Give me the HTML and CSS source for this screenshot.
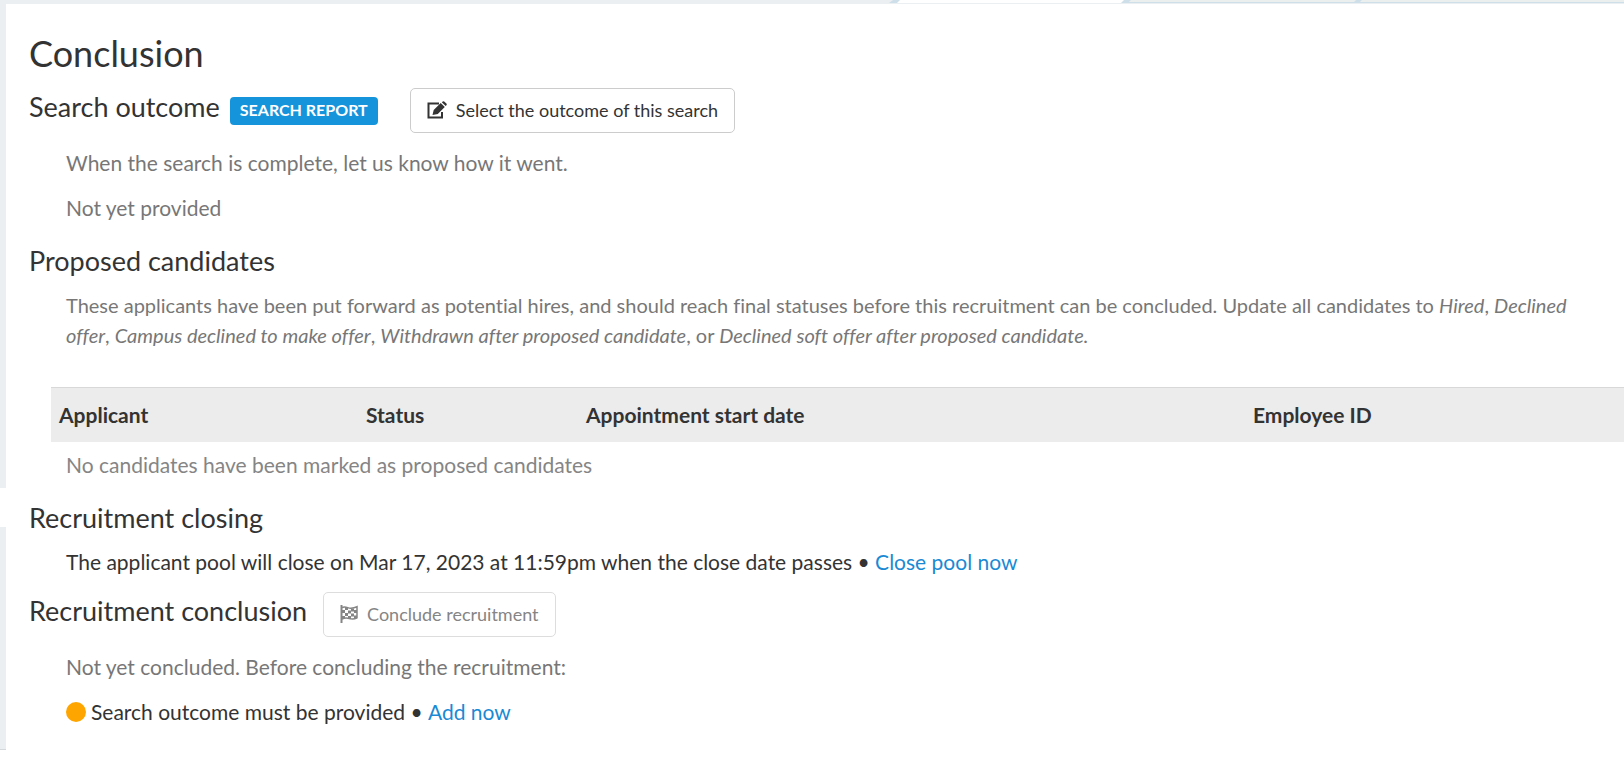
FILE: index.html
```html
<!DOCTYPE html>
<html lang="en">
<head>
    <meta charset="UTF-8">
    <title>Conclusion</title>
    <meta name="viewport" content="width=device-width, initial-scale=1.0">
    <link rel="stylesheet" href="styles.css">
</head>
<body>
    <div class="tabs">
        <svg width="764" height="4" viewBox="0 0 764 4" aria-hidden="true">
            <path fill="#cfdfea" d="M33 0H764V3H29z"/>
            <path fill="#fff" d="M40 0H264L261 3H37z"/>
            <path fill="#ebefee" d="M271 0H496L494 2H269zM502 0H764V2H500z"/>
        </svg>
    </div>
    <div class="page">
        <div class="rail">
            <div class="rail-top"></div>
            <div class="rail-bottom"></div>
        </div>
        <main class="content">
            <h1>Conclusion</h1>

            <div class="heading">
                <h2>Search outcome</h2>
                <a href="#report" class="label">SEARCH REPORT</a>
                <button type="button" class="btn btn-outcome">
                    <svg class="icon icon-edit" viewBox="0 0 20 18" aria-hidden="true">
                        <path fill="none" stroke="currentColor" stroke-width="2" d="M12 2.500H1.500V16.500H15V11"/>
                        <path fill="currentColor" d="M5.500 14L6.700 9L13.700 2L17.800 6.100L10.800 13.100zM14.800 1.200L15.800 .4Q16.500 0 17.200.4L19.600 2.800Q20 3.400 19.600 4L18.700 5.100z"/>
                    </svg>
                    Select the outcome of this search
                </button>
            </div>
            <p class="muted">When the search is complete, let us know how it went.</p>
            <p class="muted">Not yet provided</p>

            <h2 class="section-title">Proposed candidates</h2>
            <p class="muted description">These applicants have been put forward as potential hires, and should reach final statuses before this recruitment can be concluded. Update all candidates to <em>Hired</em>, <em>Declined offer</em>, <em>Campus declined to make offer</em>, <em>Withdrawn after proposed candidate</em>, or <em>Declined soft offer after proposed candidate.</em></p>
            <table class="candidates">
                <colgroup>
                    <col class="col-applicant">
                    <col class="col-status">
                    <col class="col-date">
                    <col>
                </colgroup>
                <thead>
                    <tr>
                        <th>Applicant</th>
                        <th>Status</th>
                        <th>Appointment start date</th>
                        <th>Employee ID</th>
                    </tr>
                </thead>
                <tbody>
                    <tr>
                        <td colspan="4">No candidates have been marked as proposed candidates</td>
                    </tr>
                </tbody>
            </table>

            <h2 class="section-title">Recruitment closing</h2>
            <p>The applicant pool will close on Mar 17, 2023 at 11:59pm when the close date passes • <a href="#close">Close pool now</a></p>

            <div class="heading">
                <h2>Recruitment conclusion</h2>
                <button type="button" class="btn btn-conclude" disabled>
                    <svg class="icon icon-flag" viewBox="0 0 18 18" aria-hidden="true">
                        <path fill="none" stroke="currentColor" stroke-width="2" d="M1.500 0V18"/>
                        <path fill="none" stroke="currentColor" stroke-width="1.500" d="M2 2.500C6 .5 8 3.800 11 3.300Q14 3 17 1.700V12.800Q14 14.300 11 13.800C8 13.200 6 12 2 14"/>
                        <path fill="currentColor" d="M5 2h3v3H5zM11 3.500h3v3h-3zM2 5h3v3H2zM8 5.500h3v3H8zM14 5h3v3h-3zM5 8h3v3H5zM11 8.500h3v3h-3zM2 11h3v2H2zM8 11h3v3H8zM14 10.500h3v3h-3z"/>
                    </svg>
                    Conclude recruitment
                </button>
            </div>
            <p class="muted">Not yet concluded. Before concluding the recruitment:</p>
            <p class="todo"><span class="dot"></span>Search outcome must be provided • <a href="#add">Add now</a></p>
        </main>
    </div>
</body>
</html>
```

FILE: styles.css
```css
body { margin: 0; background: #fff; color: #333; font-family: Lato, "Open Sans", Arial, sans-serif; font-size: 21px; line-height: 30px; font-variant-ligatures: none; }
h1, h2, p { margin: 0; font-weight: 400; }
h1 { font-size: 36px; line-height: 46px; margin-bottom: 12px; }
h2 { font-size: 27px; line-height: 34px; }
a { color: #1a8ad4; text-decoration: none; }
a:hover { text-decoration: underline; }

.tabs { display: flex; justify-content: flex-end; height: 4px; background: #ebeff2; overflow: hidden; }
.page { display: flex; }

/* strip of the page background left of the panel */
.rail { flex: none; display: flex; flex-direction: column; gap: 39px; width: 6px; }
.rail-top { flex: 485; background: #ebeff2; }
.rail-bottom { flex: 222; background: #ebeff2; border-bottom: 1px solid #d5d8da; }

.content { flex: 1; min-width: 0; padding: 26px 0 8px 23px; }
.content p { padding-left: 37px; margin-bottom: 15px; }
.muted { color: #777; }
.content .description { padding-right: 24px; font-size: 20px; }
.section-title { margin: 21px 0 12px; }

.heading { display: flex; align-items: flex-start; margin-bottom: 15px; }
.heading h2 { padding-top: 2px; }
.label { margin: 9px 0 0 10px; padding: 0 10px 2px; border-radius: 4px; background: #1594dc; color: #fff; font-size: 16px; font-weight: 700; line-height: 26px; }
.btn { display: flex; align-items: center; height: 45px; padding: 0 16px 2px; border: 1px solid #ccc; border-radius: 5px; background: #fff; color: #333; font-family: inherit; font-size: 18px; line-height: 26px; }
.btn:disabled { border-color: #ddd; color: #858585; }
.btn-outcome { margin-left: 32px; }
.btn-conclude { margin-left: 16px; }
.icon { flex: none; height: 18px; margin-right: 9px; }
.icon-edit { width: 20px; }
.icon-flag { width: 18px; }

.candidates { width: calc(100% - 22px); margin: 37px 0 0 22px; border-collapse: collapse; table-layout: fixed; }
.candidates th { padding: 12px 8px; border-top: 1px solid #d8d8d8; background: #ececec; text-align: left; font-weight: 700; }
.candidates td { padding: 8px 15px 0; color: #858585; }
.col-applicant { width: 307px; }
.col-status { width: 220px; }
.col-date { width: 667px; }

.todo { display: flex; align-items: center; white-space: pre; }
.dot { width: 20px; height: 20px; margin-right: 5px; border-radius: 50%; background: #ffa500; }
```
